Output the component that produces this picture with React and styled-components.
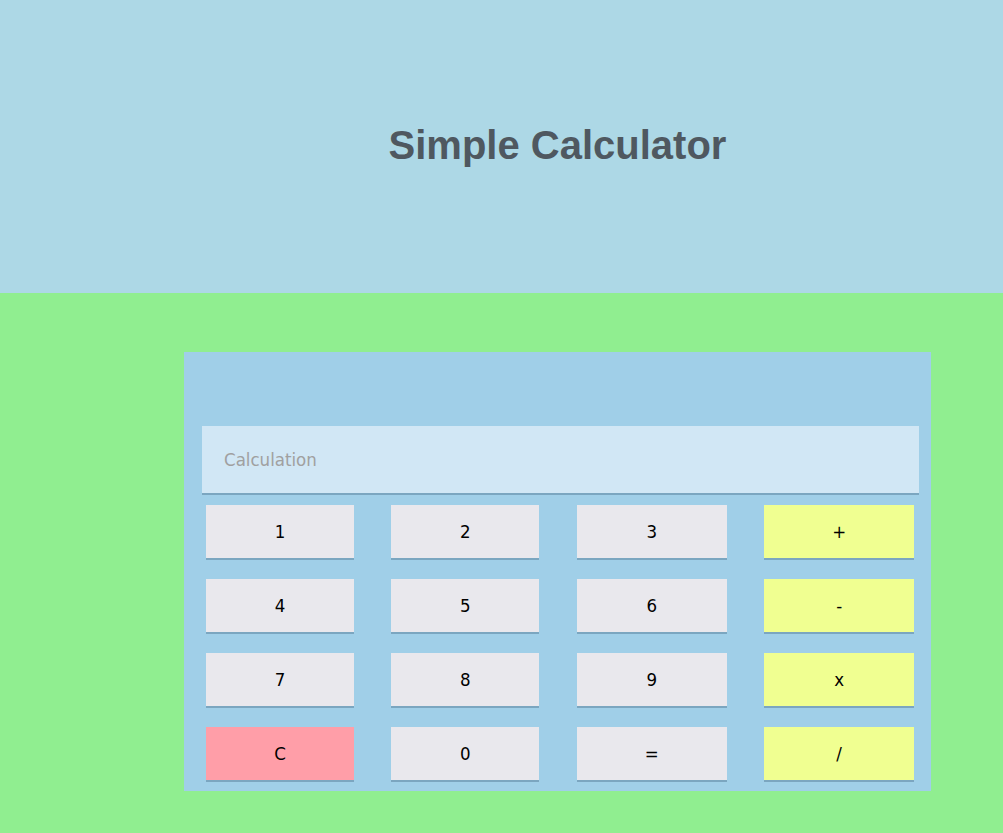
import React, { useState } from 'react';
import styled, { createGlobalStyle } from 'styled-components';

const GlobalStyle = createGlobalStyle`
  html, body {
    margin: 0;
    padding: 0;
    background: #90ee90;
  }
  body {
    font-family: "DejaVu Sans Condensed", "DejaVu Sans", sans-serif;
  }
`;

const Header = styled.header`
  box-sizing: border-box;
  height: 293px;
  padding-bottom: 3px;
  background: #add8e6;
  display: flex;
  align-items: center;
`;

const Column = styled.div`
  margin-left: 184px;
  width: 747px;
`;

const Title = styled.h1`
  margin: 0;
  text-align: center;
  font-family: "Liberation Sans", Arial, sans-serif;
  font-size: 40px;
  font-weight: bold;
  color: #4f5860;
`;

const Main = styled.main`
  padding: 59px 0 42px;
`;

const Panel = styled.div`
  background: #a0cfe8;
  padding: 74px 0 9px;
`;

const Display = styled.input`
  display: block;
  box-sizing: border-box;
  margin-left: 18px;
  width: 717px;
  height: 69px;
  border: none;
  border-bottom: 2px solid #7ba6c0;
  background: #d1e7f5;
  padding: 0 22px;
  font-family: inherit;
  font-size: 18.5px;
  color: #222;
  outline: none;

  &::placeholder {
    color: #a0a0a0;
  }
`;

const Keys = styled.div`
  display: grid;
  grid-template-columns: 148px 148px 150px 150px;
  column-gap: 37.4px;
  row-gap: 19px;
  padding: 10px 0 0 22px;
`;

const tones = {
  num: '#e9e8ed',
  op: '#f0ff91',
  clear: '#ff9ea8'
};

const Key = styled.button`
  height: 55px;
  border: none;
  border-bottom: 2px solid #7ba6c0;
  background: ${p => tones[p.tone]};
  font-family: inherit;
  font-size: 18.5px;
  color: #000;
  padding: 0;
  cursor: pointer;
`;

const layout = [
  ['1', 'num'], ['2', 'num'], ['3', 'num'], ['+', 'op'],
  ['4', 'num'], ['5', 'num'], ['6', 'num'], ['-', 'op'],
  ['7', 'num'], ['8', 'num'], ['9', 'num'], ['x', 'op'],
  ['C', 'clear'], ['0', 'num'], ['=', 'num'], ['/', 'op']
];

export default function App() {
  const [expr, setExpr] = useState('');

  const press = key => {
    if (key === 'C') return setExpr('');
    if (key === '=') {
      try {
        // only digits and operators ever reach here
        const result = Function(`return (${expr.replace(/x/g, '*')})`)();
        setExpr(String(result));
      } catch (e) {
        setExpr('');
      }
      return;
    }
    setExpr(expr + key);
  };

  return (
    <>
      <GlobalStyle />
      <Header>
        <Column>
          <Title>Simple Calculator</Title>
        </Column>
      </Header>
      <Main>
        <Column>
          <Panel>
            <Display placeholder="Calculation" value={expr} readOnly />
            <Keys>
              {layout.map(([label, tone]) => (
                <Key key={label} tone={tone} onClick={() => press(label)}>
                  {label}
                </Key>
              ))}
            </Keys>
          </Panel>
        </Column>
      </Main>
    </>
  );
}
